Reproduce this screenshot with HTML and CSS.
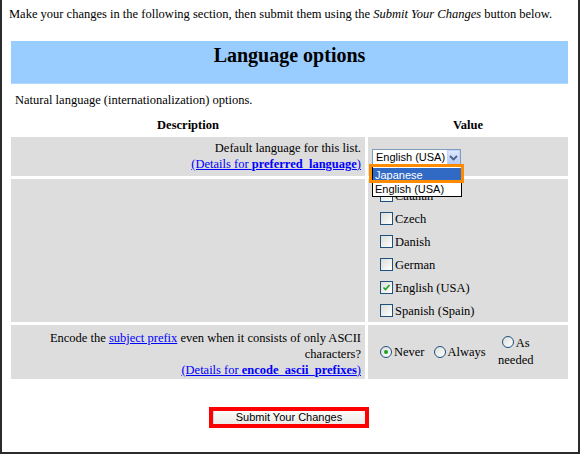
FILE: index.html
```html
<!DOCTYPE html>
<html>
<head>
<meta charset="utf-8">
<link rel="stylesheet" href="styles.css">
</head>
<body>
<div class="frame">
  <p class="intro">Make your changes in the following section, then submit them using the <em>Submit Your Changes</em> button below.</p>
  <div class="opts">
    <div class="hdr"><h2>Language options</h2></div>
    <div class="note">Natural language (internationalization) options.</div>
    <div class="th">Description</div>
    <div class="th">Value</div>

    <div class="cell desc">Default language for this list.<br><a href="#">(Details for <b>preferred_language</b>)</a></div>
    <div class="cell val val-sel">
      <div class="select">
        <span class="sel-text">English (USA)</span>
        <span class="sel-btn"><svg width="9" height="6" viewBox="0 0 9 6"><path d="M1 1 L4.5 4.5 L8 1" fill="none" stroke="#4d6185" stroke-width="1.8"/></svg></span>
        <div class="list">
          <div class="opt hi">Japanese</div>
          <div class="opt">English (USA)</div>
        </div>
        <div class="mark"></div>
      </div>
    </div>

    <div class="cell desc"></div>
    <div class="cell val checks">
      <div class="ck"><span class="cb"></span>Catalan</div>
      <div class="ck"><span class="cb"></span>Czech</div>
      <div class="ck"><span class="cb"></span>Danish</div>
      <div class="ck"><span class="cb"></span>German</div>
      <div class="ck"><span class="cb"><svg width="11" height="11" viewBox="0 0 11 11"><path d="M2.5 5.5 L4.5 7.5 L8.5 3" fill="none" stroke="#21a121" stroke-width="1.6"/></svg></span>English (USA)</div>
      <div class="ck"><span class="cb"></span>Spanish (Spain)</div>
    </div>

    <div class="cell desc desc3">Encode the <a href="#">subject prefix</a> even when it consists of only ASCII characters?<br><a href="#">(Details for <b>encode_ascii_prefixes</b>)</a></div>
    <div class="cell val radios">
      <div class="ro"><span class="rb on"><span class="dot"></span></span>Never</div>
      <div class="ro"><span class="rb"></span>Always</div>
      <div class="ro ro-wrap"><span class="rb"></span>As needed</div>
    </div>
  </div>
  <div class="submit">
    <div class="redbox"><button class="btn">Submit Your Changes</button></div>
  </div>
</div>
</body>
</html>
```
FILE: styles.css
```css
html, body {
  margin: 0;
  padding: 0;
  background: #fff;
}
.frame {
  box-sizing: border-box;
  width: 580px;
  height: 454px;
  border: 2px solid #2b2b2b;
  border-top: 0;
  padding: 0 7px 0 6px;
  font-family: "Liberation Serif", "Times New Roman", serif;
  font-size: 12.5px;
  line-height: 16px;
  color: #000;
}
.intro {
  margin: 0;
  padding: 6px 0 0 1px;
  white-space: nowrap;
}
.opts {
  display: grid;
  grid-template-columns: 354px 1fr;
  gap: 3px;
  padding: 0 3px;
  margin-top: 19px;
}
.hdr {
  grid-column: 1 / -1;
  background: #99ccff;
  height: 43px;
  box-sizing: border-box;
  padding-top: 2px;
  text-align: center;
  border-bottom: 1px solid #b3d9ff;
}
.hdr h2 {
  margin: 0;
  font-size: 20px;
  line-height: 24px;
  font-weight: bold;
}
.note {
  grid-column: 1 / -1;
  padding: 5px 4px 4px;
}
.th {
  font-weight: bold;
  text-align: center;
  padding: 2px 0 1px;
}
.cell {
  background: #dddddd;
}
.desc {
  text-align: right;
  padding: 3px 4px 4px;
}
.desc3 {
  padding: 5px 4px 1px;
}
a {
  color: #0000ff;
  text-decoration: underline;
}
.val-sel {
  display: flex;
  align-items: center;
  padding-left: 4px;
}
.select {
  position: relative;
  box-sizing: border-box;
  width: 89px;
  height: 17px;
  border: 1px solid #7f9db9;
  background: #fff;
  font-family: "Liberation Sans", Arial, sans-serif;
  font-size: 11px;
  line-height: 15px;
  margin-top: 2px;
}
.sel-text {
  padding-left: 3px;
}
.sel-btn {
  position: absolute;
  right: 0;
  top: 0;
  width: 13px;
  height: 15px;
  box-sizing: border-box;
  border: 1px solid #c3d3fd;
  background: linear-gradient(#dce6fd, #b7cbf8);
  display: flex;
  align-items: center;
  justify-content: center;
}
.list {
  position: absolute;
  left: -1px;
  top: 16px;
  width: 90px;
  box-sizing: border-box;
  border: 1px solid #000;
  background: #fff;
  z-index: 2;
}
.opt {
  height: 14px;
  line-height: 14px;
  padding-left: 2px;
}
.opt.hi {
  background: #316ac5;
  color: #fff;
  margin: 1px 0 0;
}
.mark {
  position: absolute;
  left: -4px;
  top: 14px;
  width: 95px;
  height: 19px;
  box-sizing: border-box;
  border: 3px solid #ff8c00;
  z-index: 3;
}
.checks {
  padding: 5px 0 0 12px;
}
.ck {
  height: 23px;
  display: flex;
  align-items: center;
}
.cb {
  box-sizing: border-box;
  width: 13px;
  height: 13px;
  border: 1px solid #1c5180;
  background: linear-gradient(135deg, #dcdcd7, #ffffff);
  margin-right: 2px;
  display: flex;
  align-items: center;
  justify-content: center;
}
.radios {
  display: flex;
  align-items: center;
  padding-left: 12px;
}
.ro {
  display: flex;
  align-items: center;
  margin-right: 9px;
}
.ro-wrap {
  display: block;
  width: 40px;
  text-align: center;
  margin-left: 1px;
  margin-right: 0;
  line-height: 17px;
}
.rb {
  box-sizing: border-box;
  width: 12px;
  height: 12px;
  border: 1px solid #1c5180;
  border-radius: 50%;
  background: linear-gradient(135deg, #dcdcd7, #ffffff);
  margin-right: 2px;
  display: inline-flex;
  align-items: center;
  justify-content: center;
  vertical-align: -1px;
}
.dot {
  width: 4px;
  height: 4px;
  border-radius: 50%;
  background: #21a121;
}
.submit {
  display: flex;
  justify-content: center;
  margin-top: 28px;
  padding-right: 2px;
}
.redbox {
  border: 4px solid #ff0000;
  width: 152px;
  height: 13px;
}
.btn {
  display: block;
  width: 100%;
  height: 13px;
  margin: 0;
  padding: 0;
  border: 0;
  border-left: 1px solid #c7d4ef;
  background: linear-gradient(#fbfbf9, #ecebe6);
  font-family: "Liberation Sans", Arial, sans-serif;
  font-size: 11px;
  line-height: 13px;
  color: #000;
}
```
